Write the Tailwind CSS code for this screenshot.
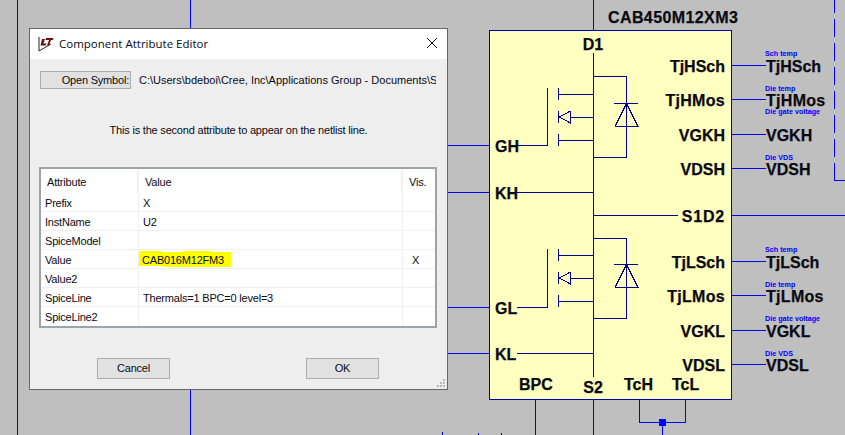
<!DOCTYPE html>
<html lang="en">
<head>
  <meta charset="UTF-8">
  <title>Component Attribute Editor</title>
  <script src="https://cdn.jsdelivr.net/npm/@tailwindcss/browser@4"></script>
</head>
<body class="bg-[#bfbfbf]">
  <div class="relative w-[845px] h-[435px] overflow-hidden">
    <!-- schematic canvas -->
    <svg class="absolute left-0 top-0" width="845" height="435" shape-rendering="crispEdges" font-family="'Liberation Sans', sans-serif">
      <!-- wires -->
      <g stroke="#0000ff" fill="none">
        <path d="M17.5 0V435M190.5 0V435M447 145.5H489M447 192.5H489M447 307.5H489M447 353.5H489"/>
        <path d="M593.5 0V30M535.5 399V435M593.5 399V435M639.5 399V422.5H685.5V399M662.5 422V435"/>
        <path d="M731 65.5H766M731 99.5H766M731 134.5H766M731 168.5H766M731 215.5H845M731 261.5H766M731 295.5H766M731 330.5H766M731 364.5H766"/>
        <path d="M834.5 0V180" stroke-dasharray="18 6" stroke-dashoffset="5"/>
        <path d="M834 180.5H845"/>
      </g>
      <rect x="659" y="419" width="7" height="7" fill="#0000ff"/>
      <path d="M442.5 435V432M478.5 435V433M501.5 435V433" stroke="#0000a0" fill="none"/>
      <!-- symbol body -->
      <rect x="489.5" y="30.5" width="242" height="369" fill="#ffffc0" stroke="#0000a8"/>
      <g stroke="#000090" fill="none">
        <path d="M593.5 53V377M593.5 76.5H626.5V157.5H593.5M614 103.5H638M615 126.5H638L626.5 103.5L615 126.5"/>
        <path d="M517 145.5H547.5V88M558.5 88V100M558.5 111V123M558.5 134V146M558.5 94.5H593.5M558.5 140.5H593.5M570.5 117.5H593.5M570.5 111V123L559 117L570.5 111"/>
        <path d="M517 192.5H593.5M593.5 215.5H678"/>
        <path d="M593.5 238.5H626.5V318.5H593.5M614 264.5H638M615 287.5H638L626.5 264.5L615 287.5"/>
        <path d="M517 307.5H547.5V249M558.5 249V261M558.5 272V284M558.5 295V307M558.5 255.5H593.5M558.5 301.5H593.5M570.5 278.5H593.5M570.5 272V284L559 278L570.5 272"/>
        <path d="M517 353.5H593.5"/>
      </g>
      <!-- pin names -->
      <g font-size="16" font-weight="700" fill="#0a0a14" stroke="#0a0a14" stroke-width="0.25">
        <text x="608" y="23" letter-spacing="0.4">CAB450M12XM3</text>
        <text x="593" y="50" text-anchor="middle">D1</text>
        <text x="593" y="393" text-anchor="middle">S2</text>
        <text x="495" y="152">GH</text>
        <text x="495" y="199">KH</text>
        <text x="495" y="314">GL</text>
        <text x="495" y="360">KL</text>
        <text x="519" y="390">BPC</text>
        <text x="624" y="390">TcH</text>
        <text x="672" y="390">TcL</text>
        <g text-anchor="end">
          <text x="725" y="72">TjHSch</text>
          <text x="725" y="106" letter-spacing="0.3">TjHMos</text>
          <text x="725" y="141">VGKH</text>
          <text x="725" y="175">VDSH</text>
          <text x="725" y="222" letter-spacing="0.8">S1D2</text>
          <text x="725" y="268">TjLSch</text>
          <text x="725" y="302" letter-spacing="0.3">TjLMos</text>
          <text x="725" y="337">VGKL</text>
          <text x="725" y="371">VDSL</text>
        </g>
        <text x="766" y="72">TjHSch</text>
        <text x="766" y="106" letter-spacing="0.3">TjHMos</text>
        <text x="766" y="141">VGKH</text>
        <text x="766" y="175">VDSH</text>
        <text x="766" y="268">TjLSch</text>
        <text x="766" y="302" letter-spacing="0.3">TjLMos</text>
        <text x="766" y="337">VGKL</text>
        <text x="766" y="371">VDSL</text>
      </g>
      <g font-size="7.2" font-weight="700" fill="#0000ff">
        <text x="765" y="56">Sch temp</text>
        <text x="765" y="91">Die temp</text>
        <text x="765" y="114">Die gate voltage</text>
        <text x="765" y="160">Die VDS</text>
        <text x="765" y="252">Sch temp</text>
        <text x="765" y="287">Die temp</text>
        <text x="765" y="321">Die gate voltage</text>
        <text x="765" y="356">Die VDS</text>
      </g>
    </svg>

    <!-- dialog window -->
    <div class="absolute left-[29px] top-[28px] w-[419px] h-[362px] flex flex-col bg-[#eeeeee] border border-[#666666] font-['Liberation_Sans',sans-serif] text-[11px] tracking-[-0.2px] text-[#0a0a14]">
      <div class="h-[30px] shrink-0 flex items-center bg-white pl-[8px] pr-[8px]">
        <svg width="16" height="16" viewBox="0 0 16 16" class="mr-[5px]">
          <path d="M1 1V15L13 8" fill="none" stroke="#222" stroke-width="1"/>
          <path d="M4 3H7L5.5 7.5H8.5L8 9.5H2.5Z" fill="#6b1414"/>
          <path d="M8 2H15.5L15 4H13L11 9.5H9L11 4H7.5Z" fill="#6b1414"/>
        </svg>
        <span class="font-['Open_Sans',sans-serif] text-[11.5px] tracking-normal">Component Attribute Editor</span>
        <svg width="12" height="12" viewBox="0 0 12 12" class="ml-auto mr-[1px] mb-[2px]">
          <path d="M1 1L11 11M11 1L1 11" stroke="#111" stroke-width="1" fill="none"/>
        </svg>
      </div>
      <div class="flex-1 flex flex-col px-[10px] relative">
        <div class="flex items-center mt-[12px] h-[18px]">
          <button class="w-[91px] h-[18px] shrink-0 bg-[#e1e1e1] border border-[#adadad] text-right pr-[1px] leading-none">Open Symbol:</button>
          <div class="ml-[8px] w-[297px] overflow-hidden whitespace-nowrap tracking-normal">C:\Users\bdeboi\Cree, Inc\Applications Group - Documents\S</div>
        </div>
        <p class="mt-[34px] text-center h-[14px] leading-[14px]">This is the second attribute to appear on the netlist line.</p>
        <div class="-ml-px mt-[30px] w-[398px] h-[161px] bg-white border-2 border-[#9aa4a9]">
          <div class="grid grid-cols-[98px_264px_1fr] h-[24px] items-center">
            <div class="pl-[6px] pt-[2px] h-full flex items-center border-r-2 border-[#f0f0f0]">Attribute</div>
            <div class="pl-[6px] pt-[2px] h-full flex items-center border-r-2 border-[#f0f0f0]">Value</div>
            <div class="pl-[6px] pt-[2px] h-full flex items-center">Vis.</div>
          </div>
          <div class="grid grid-cols-[98px_264px_1fr] auto-rows-[19px] leading-[21px]">
            <div class="pl-[4px] border-b border-r border-[#f0f0f0]">Prefix</div>
            <div class="pl-[4px] border-b border-r border-[#f0f0f0]">X</div>
            <div class="border-b border-[#f0f0f0]"></div>
            <div class="pl-[4px] border-b border-r border-[#f0f0f0]">InstName</div>
            <div class="pl-[4px] border-b border-r border-[#f0f0f0]">U2</div>
            <div class="border-b border-[#f0f0f0]"></div>
            <div class="pl-[4px] border-b border-r border-[#f0f0f0]">SpiceModel</div>
            <div class="pl-[4px] border-b border-r border-[#f0f0f0]"></div>
            <div class="border-b border-[#f0f0f0]"></div>
            <div class="pl-[4px] border-b border-r border-[#f0f0f0]">Value</div>
            <div class="relative pl-[3px] border-b border-r border-[#f0f0f0]">
              <!-- hand-drawn marker highlight behind the value -->
              <div class="absolute left-0 top-0 flex items-start">
                <div class="w-[23px] h-[15px] mt-[1px] bg-[#ffff00]"></div>
                <div class="w-[21px] h-[15px] mt-[2px] bg-[#ffff00]"></div>
                <div class="w-[29px] h-[16px] mt-[1px] bg-[#ffff00]"></div>
                <div class="w-[19px] h-[15px] mt-[2px] bg-[#ffff00]"></div>
              </div>
              <span class="relative">CAB016M12FM3</span>
            </div>
            <div class="pl-[9px] border-b border-[#f0f0f0]">X</div>
            <div class="pl-[4px] border-b border-r border-[#f0f0f0]">Value2</div>
            <div class="pl-[4px] border-b border-r border-[#f0f0f0]"></div>
            <div class="border-b border-[#f0f0f0]"></div>
            <div class="pl-[4px] border-b border-r border-[#f0f0f0]">SpiceLine</div>
            <div class="pl-[4px] border-b border-r border-[#f0f0f0]">Thermals=1 BPC=0 level=3</div>
            <div class="border-b border-[#f0f0f0]"></div>
            <div class="pl-[4px] border-r border-[#f0f0f0]">SpiceLine2</div>
            <div class="border-r border-[#f0f0f0]"></div>
            <div></div>
          </div>
        </div>
        <div class="flex mt-[30px] pl-[57px] gap-[136px]">
          <button class="w-[73px] h-[21px] bg-[#e1e1e1] border border-[#adadad]">Cancel</button>
          <button class="w-[73px] h-[21px] bg-[#e1e1e1] border border-[#adadad]">OK</button>
        </div>
        <svg width="10" height="10" class="absolute right-[1px] bottom-[1px]" fill="#b8b8b8">
          <rect x="7" y="1" width="2" height="2"/><rect x="4" y="4" width="2" height="2"/><rect x="7" y="4" width="2" height="2"/>
          <rect x="1" y="7" width="2" height="2"/><rect x="4" y="7" width="2" height="2"/><rect x="7" y="7" width="2" height="2"/>
        </svg>
      </div>
    </div>
  </div>
</body>
</html>
